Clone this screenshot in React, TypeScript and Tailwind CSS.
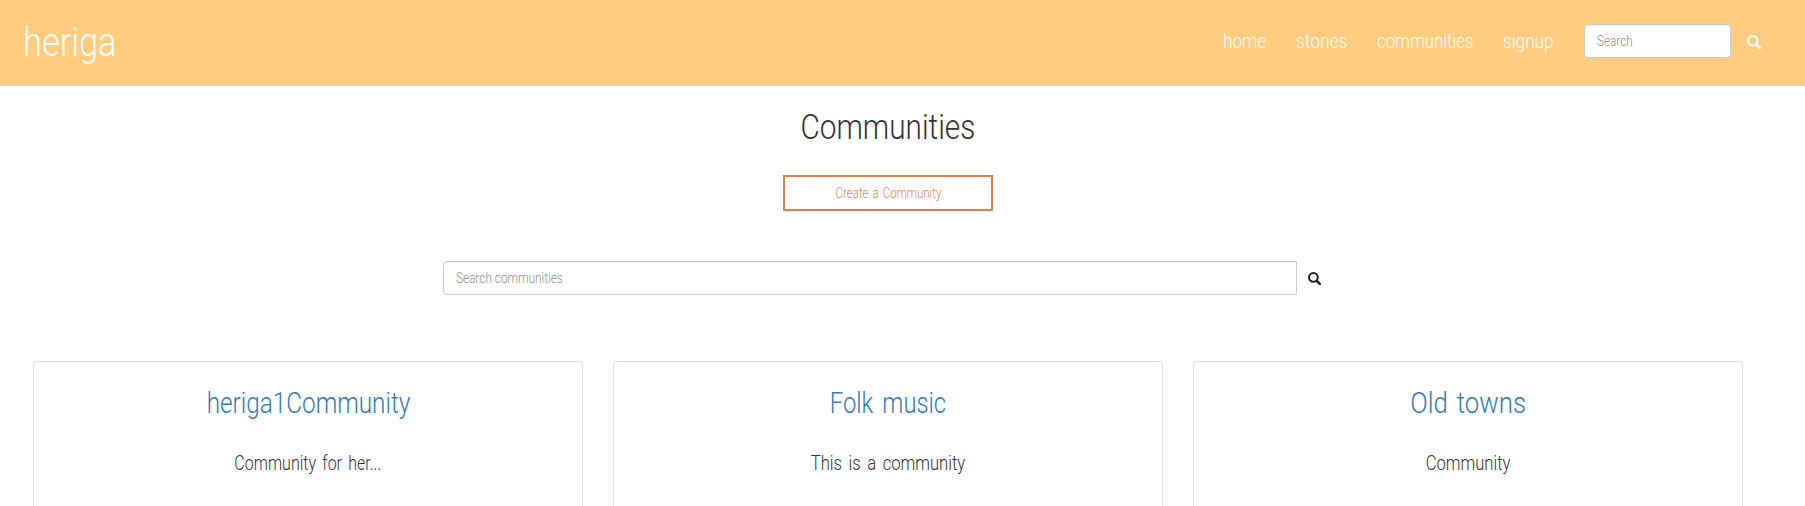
type FieldProps = { placeholder: string; className: string; inputClassName: string };

function SearchIcon({ className }: { className: string }) {
  return (
    <svg viewBox="0 0 14 14" className={className} fill="none" stroke="currentColor" aria-hidden="true">
      <circle cx="5.8" cy="5.8" r="4.7" strokeWidth="2.1" />
      <path d="M9.2 9.2 L12.7 12.7" strokeWidth="2.7" strokeLinecap="round" />
    </svg>
  );
}

function Field({ placeholder, className, inputClassName }: FieldProps) {
  return (
    <div className={`h-[34px] overflow-hidden border bg-white pl-3 shadow-[inset_0_1px_1px_rgba(0,0,0,0.075)] ${className}`}>
      <input
        placeholder={placeholder}
        className={`block h-8 w-full origin-left bg-transparent font-light text-[#555] outline-none placeholder:text-[#8c8c8c] placeholder:opacity-100 ${inputClassName}`}
      />
    </div>
  );
}

const links = [
  { label: "home", className: "w-[43px]", text: "scale-x-[0.86]" },
  { label: "stories", className: "w-[51px]", text: "scale-x-[0.87]" },
  { label: "communities", className: "w-[96px]", text: "scale-x-[0.84]" },
  { label: "signup", className: "w-[50px]", text: "scale-x-[0.86]" },
];

const communities = [
  { title: "heriga1Community", description: "Community for her...", titleScale: "scale-x-[0.838]", textScale: "scale-x-[0.8] [word-spacing:3px]" },
  { title: "Folk music", description: "This is a community", titleScale: "scale-x-[0.82] [word-spacing:4px]", textScale: "scale-x-[0.83] [word-spacing:3px]" },
  { title: "Old towns", description: "Community", titleScale: "scale-x-[0.89] [word-spacing:3px]", textScale: "scale-x-[0.83]" },
];

export default function App() {
  return (
    <div className="h-[506px] overflow-hidden bg-white font-['Roboto',sans-serif] font-light text-[#333]">
      <header className="flex h-[86px] items-start justify-between bg-[#ffcc80] pl-[23px] pr-11 pt-6 text-white">
        <a href="#" className="-mt-px block origin-left scale-x-[0.86] whitespace-nowrap text-[40px] leading-10">
          heriga
        </a>
        <div className="flex">
          <nav className="mr-[31px] flex gap-[30px] text-xl leading-[35px]">
            {links.map((link) => (
              <a key={link.label} href="#" className={link.className}>
                <span className={`block w-max origin-left ${link.text}`}>{link.label}</span>
              </a>
            ))}
          </nav>
          <Field placeholder="Search" className="w-[147px] rounded border-[#ccc]" inputClassName="text-sm scale-x-[0.84]" />
          <button className="ml-4 mt-[11px] h-[14px]" aria-label="Search">
            <SearchIcon className="size-[14px]" />
          </button>
        </div>
      </header>

      <main>
        <section className="flex w-[1776px] flex-col items-center pt-[22px]">
          <h1 className="scale-x-[0.85] text-[35px] leading-10">Communities</h1>
          <button className="mt-[27px] h-9 w-[210px] border-2 border-[#dc7f50] text-sm text-[#dc7f50]">
            <span className="inline-block scale-x-[0.82] [word-spacing:1.5px]">Create a Community</span>
          </button>
        </section>

        <form className="ml-[443px] mt-[50px] flex">
          <Field placeholder="Search communities" className="w-[854px] rounded-l border-[#ccc]" inputClassName="text-sm scale-x-[0.845]" />
          <button type="button" className="ml-[11px] mt-[11px] h-[13px] text-[#222]" aria-label="Search communities">
            <SearchIcon className="size-[13px]" />
          </button>
        </form>

        <section className="ml-[33px] mt-[66px] grid w-[1710px] grid-cols-3 gap-[30px]">
          {communities.map((community) => (
            <article key={community.title} className="flex h-60 flex-col items-center rounded border border-[#ddd] pt-[25px]">
              <h2 className={`text-[29px] leading-8 text-[#337ab7] ${community.titleScale}`}>
                <a href="#">{community.title}</a>
              </h2>
              <p className={`mt-[29px] text-xl leading-[30px] ${community.textScale}`}>{community.description}</p>
            </article>
          ))}
        </section>
      </main>
    </div>
  );
}
